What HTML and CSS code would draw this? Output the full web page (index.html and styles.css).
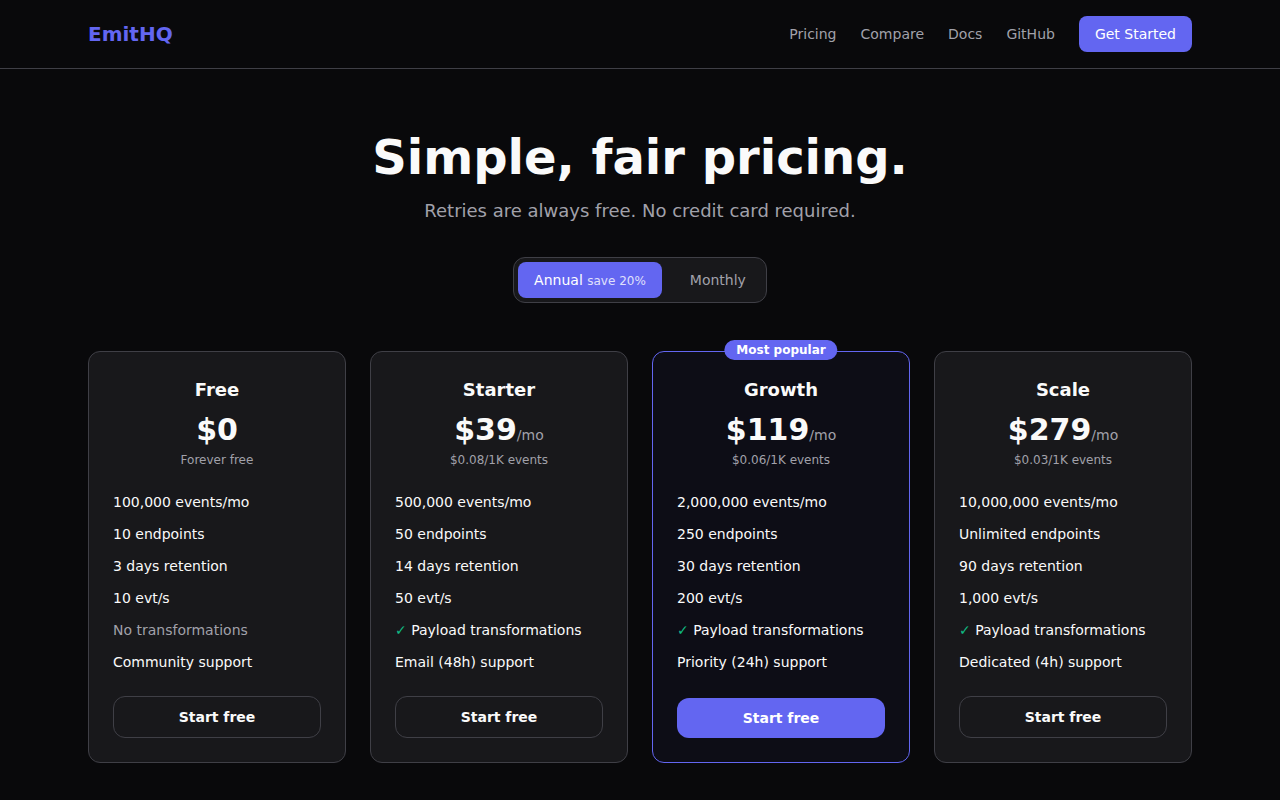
FILE: index.html
```html
<!DOCTYPE html>
<html lang="en">
<head>
<meta charset="utf-8">
<meta name="viewport" content="width=device-width, initial-scale=1">
<title>Pricing - EmitHQ</title>
<link rel="stylesheet" href="styles.css">
</head>
<body>
<header class="site-header">
  <nav class="nav">
    <a class="logo" href="#">EmitHQ</a>
    <div class="nav-links">
      <a href="#">Pricing</a>
      <a href="#">Compare</a>
      <a href="#">Docs</a>
      <a href="#">GitHub</a>
      <a class="nav-cta" href="#">Get Started</a>
    </div>
  </nav>
</header>
<main class="pricing">
  <h1 class="title">Simple, fair pricing.</h1>
  <p class="subtitle">Retries are always free. No credit card required.</p>
  <div class="toggle-row">
    <div class="toggle">
      <button class="toggle-option active" type="button">Annual <span class="save">save 20%</span></button>
      <button class="toggle-option" type="button">Monthly</button>
    </div>
  </div>
  <div class="plans">
    <section class="plan">
      <h2 class="plan-name">Free</h2>
      <div class="price"><span class="amount">$0</span></div>
      <p class="note">Forever free</p>
      <ul class="features">
        <li>100,000 events/mo</li>
        <li>10 endpoints</li>
        <li>3 days retention</li>
        <li>10 evt/s</li>
        <li class="muted">No transformations</li>
        <li>Community support</li>
      </ul>
      <a class="plan-cta" href="#">Start free</a>
    </section>
    <section class="plan">
      <h2 class="plan-name">Starter</h2>
      <div class="price"><span class="amount">$39</span><span class="period">/mo</span></div>
      <p class="note">$0.08/1K events</p>
      <ul class="features">
        <li>500,000 events/mo</li>
        <li>50 endpoints</li>
        <li>14 days retention</li>
        <li>50 evt/s</li>
        <li><span class="check">✓</span> Payload transformations</li>
        <li>Email (48h) support</li>
      </ul>
      <a class="plan-cta" href="#">Start free</a>
    </section>
    <section class="plan featured">
      <span class="badge">Most popular</span>
      <h2 class="plan-name">Growth</h2>
      <div class="price"><span class="amount">$119</span><span class="period">/mo</span></div>
      <p class="note">$0.06/1K events</p>
      <ul class="features">
        <li>2,000,000 events/mo</li>
        <li>250 endpoints</li>
        <li>30 days retention</li>
        <li>200 evt/s</li>
        <li><span class="check">✓</span> Payload transformations</li>
        <li>Priority (24h) support</li>
      </ul>
      <a class="plan-cta" href="#">Start free</a>
    </section>
    <section class="plan">
      <h2 class="plan-name">Scale</h2>
      <div class="price"><span class="amount">$279</span><span class="period">/mo</span></div>
      <p class="note">$0.03/1K events</p>
      <ul class="features">
        <li>10,000,000 events/mo</li>
        <li>Unlimited endpoints</li>
        <li>90 days retention</li>
        <li>1,000 evt/s</li>
        <li><span class="check">✓</span> Payload transformations</li>
        <li>Dedicated (4h) support</li>
      </ul>
      <a class="plan-cta" href="#">Start free</a>
    </section>
  </div>
</main>
</body>
</html>
```
FILE: styles.css
```css
:root {
  --bg: #09090b;
  --card: #18181b;
  --border: #3f3f46;
  --text: #fafafa;
  --muted: #a1a1aa;
  --accent: #6366f1;
  --success: #10b981;
}

* {
  box-sizing: border-box;
  margin: 0;
  padding: 0;
}

body {
  background: var(--bg);
  color: var(--text);
  font-family: "DejaVu Sans", sans-serif;
  font-size: 16px;
  line-height: 24px;
}

a {
  color: inherit;
  text-decoration: none;
}

.site-header {
  border-bottom: 1px solid var(--border);
}

.nav {
  display: flex;
  align-items: center;
  justify-content: space-between;
  max-width: 1152px;
  margin: 0 auto;
  padding: 16px 24px;
}

.logo {
  color: var(--accent);
  font-size: 20px;
  font-weight: 700;
  line-height: 28px;
}

.nav-links {
  display: flex;
  align-items: center;
  gap: 24px;
  color: var(--muted);
  font-size: 14px;
  line-height: 20px;
}

.nav-cta {
  padding: 8px 16px;
  border-radius: 8px;
  background: var(--accent);
  color: #fff;
}

.pricing {
  max-width: 1152px;
  margin: 0 auto;
  padding: 64px 24px;
}

.title {
  font-size: 48px;
  font-weight: 700;
  line-height: 48px;
  text-align: center;
}

.subtitle {
  margin-top: 16px;
  color: var(--muted);
  font-size: 18px;
  line-height: 28px;
  text-align: center;
}

.toggle-row {
  display: flex;
  justify-content: center;
  margin-top: 32px;
}

.toggle {
  display: flex;
  gap: 12px;
  padding: 4px;
  border: 1px solid var(--border);
  border-radius: 12px;
  background: var(--card);
}

.toggle-option {
  padding: 8px 16px;
  border: 0;
  border-radius: 8px;
  background: transparent;
  color: var(--muted);
  font-family: inherit;
  font-size: 14px;
  line-height: 20px;
  cursor: pointer;
}

.toggle-option.active {
  background: var(--accent);
  color: #fff;
}

.save {
  font-size: 12px;
  line-height: 16px;
  opacity: 0.8;
}

.plans {
  display: grid;
  grid-template-columns: repeat(4, 1fr);
  gap: 24px;
  margin-top: 48px;
}

.plan {
  position: relative;
  display: flex;
  flex-direction: column;
  padding: 24px;
  border: 1px solid var(--border);
  border-radius: 12px;
  background: var(--card);
}

.plan.featured {
  border-color: var(--accent);
  background: rgba(99, 102, 241, 0.05);
}

.badge {
  position: absolute;
  top: -12px;
  left: 50%;
  transform: translateX(-50%);
  padding: 2px 12px;
  border-radius: 10px;
  background: var(--accent);
  color: #fff;
  font-size: 12px;
  font-weight: 700;
  line-height: 16px;
  white-space: nowrap;
}

.plan-name {
  font-size: 18px;
  font-weight: 700;
  line-height: 28px;
  text-align: center;
}

.price {
  margin-top: 8px;
  font-size: 30px;
  line-height: 36px;
  text-align: center;
}

.amount {
  font-weight: 700;
}

.period {
  color: var(--muted);
  font-size: 14px;
  line-height: 20px;
}

.note {
  margin-top: 4px;
  color: var(--muted);
  font-size: 12px;
  line-height: 16px;
  text-align: center;
}

.features {
  display: grid;
  gap: 12px;
  margin-top: 24px;
  margin-bottom: 24px;
  font-size: 14px;
  line-height: 20px;
  list-style: none;
}

.muted {
  color: var(--muted);
}

.check {
  color: var(--success);
}

.plan-cta {
  margin-top: auto;
  padding: 10px 16px;
  border: 1px solid var(--border);
  border-radius: 12px;
  font-size: 14px;
  font-weight: 700;
  line-height: 20px;
  text-align: center;
}

.featured .plan-cta {
  border: 0;
  background: var(--accent);
  color: #fff;
}

@media (max-width: 900px) {
  .plans {
    grid-template-columns: repeat(2, 1fr);
  }
}

@media (max-width: 560px) {
  .plans {
    grid-template-columns: 1fr;
  }
}
```
